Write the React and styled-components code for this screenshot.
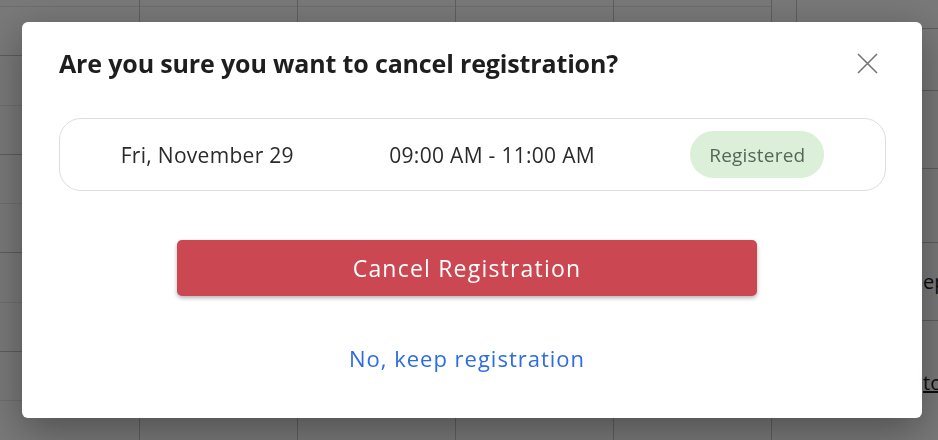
import React from "react";
import styled, { createGlobalStyle } from "styled-components";

const GlobalStyle = createGlobalStyle`
  html, body {
    margin: 0;
    padding: 0;
    width: 100%;
    height: 100%;
    overflow: hidden;
    background: #ffffff;
    font-family: "Open Sans", "Noto Sans", Arial, sans-serif;
  }
`;

// Calendar sitting behind the dialog
const Calendar = styled.div`
  display: grid;
  grid-template-columns: 139px repeat(4, 158px) 1fr;
  height: 440px;
  overflow: hidden;
  background: #ffffff;
`;

const Column = styled.div`
  display: flex;
  flex-direction: column;
  border-left: ${(p) => (p.$first ? "none" : "1px solid #c8c8c8")};
`;

const Slot = styled.div`
  flex: none;
  height: ${(p) => (p.$short ? "6px" : "48.25px")};
  border-bottom: 1px solid ${(p) => (p.$hour ? "#c4c4c4" : "#e8e8e8")};
`;

const SidePanel = styled.div`
  display: flex;
  flex-direction: column;
  border-left: 1px solid #c8c8c8;
`;

const SideHead = styled.div`
  display: grid;
  grid-template-columns: 24px 1fr;
  height: 28px;
  border-bottom: 1px solid #c4c4c4;
  & > div + div {
    border-left: 1px solid #c8c8c8;
  }
`;

const SideRow = styled.div`
  flex: none;
  height: ${(p) => p.$h}px;
  border-bottom: ${(p) => (p.$last ? "none" : "1px solid #c4c4c4")};
  display: flex;
  align-items: ${(p) => (p.$last ? "flex-start" : "center")};
  padding: ${(p) => (p.$last ? "48px 0 0 151px" : "0 0 0 151px")};
  box-sizing: border-box;
  font-size: 20px;
  color: #1a1a1a;
  white-space: nowrap;
  text-decoration: ${(p) => (p.$link ? "underline" : "none")};
`;

const Overlay = styled.div`
  position: fixed;
  inset: 0;
  background: rgba(0, 0, 0, 0.53);
  display: flex;
  align-items: center;
  justify-content: center;
  padding-left: 6px;
`;

const Modal = styled.div`
  width: 900px;
  height: 396px;
  box-sizing: border-box;
  background: #ffffff;
  border-radius: 6px;
  box-shadow: 0 12px 40px rgba(0, 0, 0, 0.35);
  padding: 24px 44px 0 37px;
  display: flex;
  flex-direction: column;
`;

const Header = styled.div`
  display: flex;
  align-items: center;
  justify-content: space-between;
  height: 34px;
`;

const Title = styled.h2`
  margin: 0;
  font-family: "Open Sans", "Noto Sans", sans-serif;
  font-weight: 700;
  font-size: 25px;
  line-height: 34px;
  color: #1e1e1e;
  letter-spacing: -0.15px;
`;

const CloseButton = styled.button`
  border: none;
  background: none;
  padding: 0;
  width: 21px;
  height: 21px;
  display: flex;
  cursor: pointer;
`;

const InfoCard = styled.div`
  margin-top: 38px;
  margin-right: -8px;
  height: 73px;
  box-sizing: border-box;
  border: 1px solid #dedede;
  border-radius: 22px;
  padding: 0 13px;
  display: flex;
  align-items: center;
  justify-content: space-around;
  font-family: "Open Sans", "Noto Sans", sans-serif;
  font-size: 21px;
  letter-spacing: 0.3px;
  color: #2a2a2a;
`;

const InfoText = styled.span`
  white-space: nowrap;
`;

const Badge = styled.span`
  height: 47px;
  padding: 0 19px;
  display: flex;
  align-items: center;
  border-radius: 24px;
  background: #dcefd9;
  color: #556756;
  font-size: 19px;
  letter-spacing: 0.2px;
`;

const CancelButton = styled.button`
  align-self: center;
  margin: 49px 0 0 -3px;
  width: 580px;
  height: 56px;
  border: none;
  border-radius: 5px;
  background: #cb4751;
  color: #ffffff;
  font-family: "Open Sans", "Noto Sans", sans-serif;
  font-size: 23px;
  letter-spacing: 1.2px;
  box-shadow: 0 2px 4px rgba(0, 0, 0, 0.3);
  cursor: pointer;
`;

const KeepLink = styled.button`
  align-self: center;
  margin: 47px 0 0 -3px;
  border: none;
  background: none;
  padding: 0;
  height: 30px;
  color: #2e6ce2;
  font-family: "Open Sans", "Noto Sans", sans-serif;
  font-size: 22px;
  letter-spacing: 1px;
  cursor: pointer;
`;

const slots = [
  { short: true },
  { hour: true },
  {},
  { hour: true },
  {},
  { hour: true },
  {},
  { hour: true },
  {},
];

const CalendarColumn = ({ first }) => (
  <Column $first={first}>
    {slots.map((s, i) => (
      <Slot key={i} $short={s.short} $hour={s.hour} />
    ))}
  </Column>
);

const CloseIcon = () => (
  <svg width="21" height="21" viewBox="0 0 21 21">
    <path d="M1 1 L20 20 M20 1 L1 20" stroke="#757575" strokeWidth="1.6" />
  </svg>
);

export default function App() {
  return (
    <>
      <GlobalStyle />
      <Calendar>
        <CalendarColumn first />
        <CalendarColumn />
        <CalendarColumn />
        <CalendarColumn />
        <CalendarColumn />
        <SidePanel>
          <SideHead>
            <div />
            <div />
          </SideHead>
          <SideRow $h={62} />
          <SideRow $h={78} />
          <SideRow $h={74} />
          <SideRow $h={78}>ep</SideRow>
          <SideRow $h={100} $link $last>
            to
          </SideRow>
        </SidePanel>
      </Calendar>
      <Overlay>
        <Modal role="dialog" aria-modal="true">
          <Header>
            <Title>Are you sure you want to cancel registration?</Title>
            <CloseButton aria-label="Close">
              <CloseIcon />
            </CloseButton>
          </Header>
          <InfoCard>
            <InfoText>Fri, November 29</InfoText>
            <InfoText>09:00 AM - 11:00 AM</InfoText>
            <Badge>Registered</Badge>
          </InfoCard>
          <CancelButton>Cancel Registration</CancelButton>
          <KeepLink>No, keep registration</KeepLink>
        </Modal>
      </Overlay>
    </>
  );
}
